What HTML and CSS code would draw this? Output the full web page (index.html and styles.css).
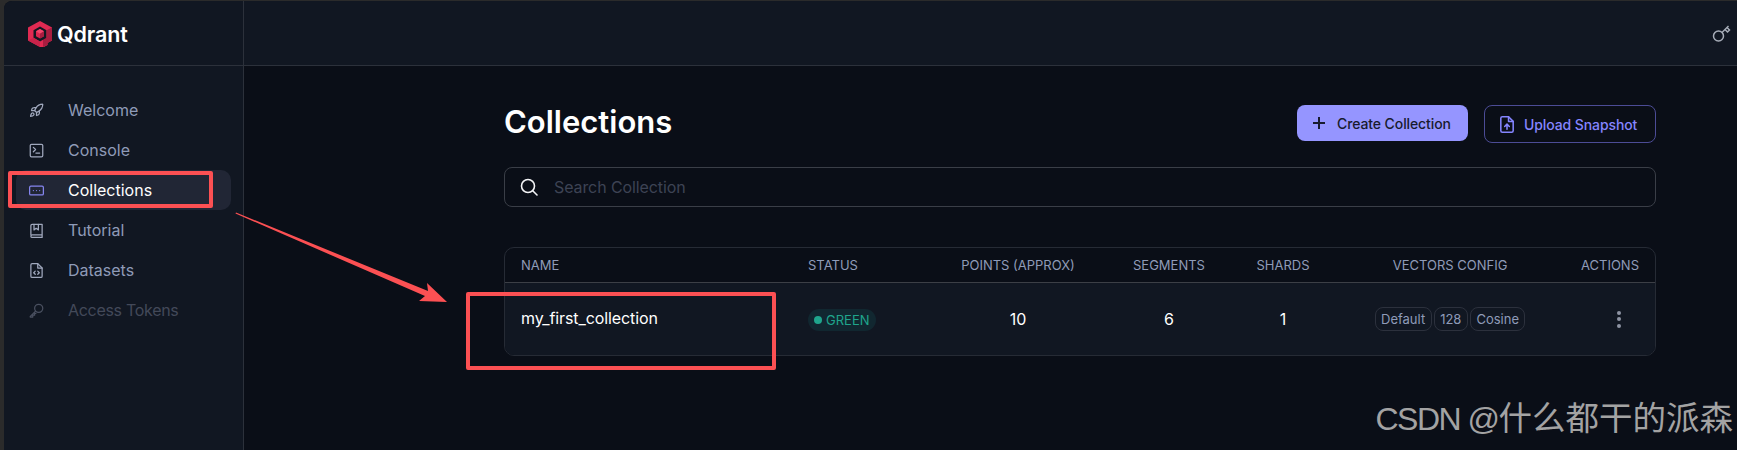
FILE: index.html
```html
<!DOCTYPE html>
<html lang="en">
<head>
<meta charset="utf-8">
<title>Qdrant Collections</title>
<link rel="stylesheet" href="styles.css">
</head>
<body>
<div class="app">
  <aside class="sidebar">
    <div class="brand">
      <svg class="logo" viewBox="0 0 24 26" width="24" height="26">
        <path fill-rule="evenodd" d="M12 0 L24 6.500 V19.500 L19.500 22 V24 L16 26 H12 L0 19.500 V6.500 Z M12 5.500 L5.500 9.200 V16.800 L12 20.500 L15 18.800 V24 L18.500 22 V9.200 Z" fill="#e02a52"/>
        <path d="M18.500 9.200 L24 6.500 V19.500 L19.500 22 V24 L15 26 V18.800 L18.500 16.800 Z" fill="#a81d40"/>
        <path d="M0 19.500 L5.500 16.800 L12 20.500 V26 Z" fill="#c9234a"/>
        <path d="M12 8 L16 10.300 V15.200 L12 17.500 L8 15.200 V10.300 Z" fill="#d9264e"/>
        <path d="M12 8 L16 10.300 L12 12.700 L8 10.300 Z" fill="#f2476d"/>
        <path d="M12 12.700 L16 10.300 V15.200 L12 17.500 Z" fill="#a81d40"/>
      </svg>
      <span class="brand-name">Qdrant</span>
    </div>
    <nav class="nav">
      <a class="nav-item">
        <svg class="nav-icon" viewBox="0 0 24 24"><path d="M4.500 16.500c-1.500 1.300-2 5-2 5s3.700-.5 5-2c.7-.8.7-2.100-.1-2.900a2.200 2.200 0 0 0-2.900-.1z"/><path d="M12 15l-3-3a22 22 0 0 1 2-3.900A12.900 12.900 0 0 1 22 2c0 2.700-.8 7.500-6 11a22 22 0 0 1-4 2z"/><path d="M9 12H4s.5-3 2-4c1.600-1.100 5-.5 5-.5"/><path d="M12 15v5s3-.5 4-2c1.100-1.600.5-5 .5-5"/></svg>
        <span>Welcome</span>
      </a>
      <a class="nav-item">
        <svg class="nav-icon" viewBox="0 0 24 24"><rect x="2" y="2" width="20" height="20" rx="2"/><path d="M7 7l3.500 3.500L7 14"/><path d="M11 16h6"/></svg>
        <span>Console</span>
      </a>
      <a class="nav-item is-active">
        <svg class="nav-icon" viewBox="0 0 24 24"><rect x="1" y="5" width="22" height="14" rx="2"/><path d="M7 12h.01M12 12h.01M17 12h.01"/></svg>
        <span>Collections</span>
      </a>
      <a class="nav-item">
        <svg class="nav-icon" viewBox="0 0 24 24"><path d="M3 19V4a2 2 0 0 1 2-2h16v21H5a2 2 0 0 1-2-2a2 2 0 0 1 2-2h16"/><path d="M8 2v9l3.500-2.500L15 11V2"/></svg>
        <span>Tutorial</span>
      </a>
      <a class="nav-item">
        <svg class="nav-icon" viewBox="0 0 24 24"><path d="M14 1H5a2 2 0 0 0-2 2v18a2 2 0 0 0 2 2h14a2 2 0 0 0 2-2V8z"/><path d="M14 1v7h7"/><path d="M10 13l-2.500 2.500L10 18M14 13l2.500 2.500L14 18"/></svg>
        <span>Datasets</span>
      </a>
      <a class="nav-item is-disabled">
        <svg class="nav-icon" viewBox="0 0 24 24"><circle cx="15.500" cy="8.500" r="6.500"/><path d="M10.500 13L2 21.500v1h4v-3h3v-3h2"/></svg>
        <span>Access Tokens</span>
      </a>
    </nav>
  </aside>
  <div class="main">
    <header class="topbar">
      <svg class="key" viewBox="0 0 20 20" width="20" height="20"><circle cx="6.500" cy="13" r="5"/><path d="M10 9.500L16.500 3"/><path d="M13 6.500l2.500 2.500 2-2-2.500-2.500"/></svg>
    </header>
    <section class="content">
      <div class="title-row">
        <h1 class="title">Collections</h1>
        <div class="actions">
          <button class="btn btn-primary">
            <svg class="btn-icon" viewBox="2 2 12 12"><path d="M8 2v12M2 8h12"/></svg>
            Create Collection
          </button>
          <button class="btn btn-outline">
            <svg class="btn-icon" viewBox="3 1 18 22"><path d="M14 2H6a2 2 0 0 0-2 2v16a2 2 0 0 0 2 2h12a2 2 0 0 0 2-2V8z"/><path d="M14 2v6h6"/><path d="M12 18v-6M9 14.500l3-3 3 3"/></svg>
            Upload Snapshot
          </button>
        </div>
      </div>
      <label class="search">
        <svg class="search-icon" viewBox="0 0 18 18"><circle cx="8" cy="8" r="6.500"/><path d="M13 13l4 4"/></svg>
        <input class="search-input" placeholder="Search Collection">
      </label>
      <div class="table">
        <div class="row row-head">
          <div class="col-name">NAME</div>
          <div class="col-status">STATUS</div>
          <div class="col-points">POINTS (APPROX)</div>
          <div class="col-segments">SEGMENTS</div>
          <div class="col-shards">SHARDS</div>
          <div class="col-vectors">VECTORS CONFIG</div>
          <div class="col-actions">ACTIONS</div>
        </div>
        <div class="row row-body">
          <div class="col-name cell-name">my_first_collection</div>
          <div class="col-status"><span class="status"><i class="dot"></i>GREEN</span></div>
          <div class="col-points cell-num">10</div>
          <div class="col-segments cell-num">6</div>
          <div class="col-shards cell-num">1</div>
          <div class="col-vectors chips"><span class="chip">Default</span><span class="chip">128</span><span class="chip">Cosine</span></div>
          <div class="col-actions cell-kebab"><span class="kebab"><i></i><i></i><i></i></span></div>
        </div>
      </div>
    </section>
  </div>
</div>
<div class="mark mark-nav"></div>
<div class="mark mark-row"></div>
<svg class="arrow" viewBox="0 0 1737 450" width="1737" height="450"><path d="M236 212.500 L428 291 L427 283 L447 302 L419 301 L425 296 L235.500 213.500 Z"/></svg>
<div class="watermark"><span class="wm-latin">CSDN @</span><span class="wm-cjk">什么都干的派森</span></div>
</body>
</html>
```
FILE: styles.css
```css
* { box-sizing: border-box; }
html, body { margin: 0; height: 450px; overflow: hidden; }
body {
  position: relative;
  background: #2b2b2b;
  font-family: Inter, "Liberation Sans", sans-serif;
  padding: 1px 0 0 4px;
}
.app {
  display: flex;
  height: 449px;
  background: #0a0e17;
  border-top-left-radius: 8px;
  overflow: hidden;
}
.sidebar {
  flex: 0 0 240px;
  background: #111722;
  border-right: 1px solid #2c313b;
}
.brand {
  display: flex;
  align-items: center;
  gap: 1px;
  height: 65px;
  padding: 1px 0 0 24px;
  border-bottom: 1px solid #2c313b;
}
.logo { display: block; }
.brand-name {
  margin-left: 4px;
  color: #ffffff;
  font-size: 21.500px;
  font-weight: 600;
  letter-spacing: -0.1px;
}
.nav {
  display: flex;
  flex-direction: column;
  padding: 24px 12px 0;
}
.nav-item {
  display: flex;
  align-items: center;
  gap: 24px;
  height: 40px;
  padding-left: 13px;
  border-radius: 10px;
  color: #8f9bb8;
  font-size: 16px;
}
.nav-icon {
  width: 15px;
  height: 15px;
  flex: none;
  fill: none;
  stroke: #a0a8bd;
  stroke-width: 2;
  stroke-linecap: round;
  stroke-linejoin: round;
}
.nav-item.is-active { background: #212635; color: #ffffff; }
.nav-item.is-active .nav-icon { stroke: #8585ee; }
.nav-item.is-disabled { color: #434959; letter-spacing: -0.3px; }
.nav-item.is-disabled .nav-icon { stroke: #4a5060; }
.main { flex: 1; min-width: 0; display: flex; flex-direction: column; }
.topbar {
  display: flex;
  justify-content: flex-end;
  align-items: center;
  height: 65px;
  padding: 0 5px 0 0;
  background: #111722;
  border-bottom: 1px solid #2c313b;
}
.key {
  fill: none;
  stroke: #a7adb8;
  stroke-width: 1.500;
}
.content { padding: 39px 81px 0 260px; }
.title-row {
  display: flex;
  justify-content: space-between;
  align-items: flex-start;
  height: 62px;
}
.title {
  margin: -1px 0 0;
  color: #ffffff;
  font-size: 31px;
  line-height: 36px;
  font-weight: 600;
}
.actions { display: flex; gap: 16px; }
.btn {
  display: flex;
  align-items: center;
  border-radius: 8px;
  font-family: inherit;
  font-size: 14px;
  font-weight: 500;
  letter-spacing: -0.1px;
  height: 38px;
  padding: 0;
}
.btn-primary {
  width: 171px;
  height: 36px;
  gap: 12px;
  padding-left: 16px;
  background: #9595ff;
  color: #181b2e;
  border: 0;
}
.btn-primary .btn-icon {
  width: 12px;
  height: 12px;
  stroke: #181b2e;
  stroke-linecap: butt;
}
.btn-outline {
  width: 172px;
  gap: 10px;
  padding-left: 15px;
  background: transparent;
  color: #8585ff;
  border: 1px solid #4c4c96;
}
.btn-icon {
  width: 14px;
  height: 17px;
  flex: none;
  fill: none;
  stroke: #8585ff;
  stroke-width: 2;
  stroke-linecap: round;
  stroke-linejoin: round;
}
.search {
  display: flex;
  align-items: center;
  gap: 16px;
  height: 40px;
  padding-left: 15px;
  border: 1px solid #3a3e47;
  border-radius: 8px;
}
.search-icon {
  width: 18px;
  height: 18px;
  flex: none;
  fill: none;
  stroke: #f2f3f5;
  stroke-width: 1.600;
  stroke-linecap: round;
}
.search-input {
  flex: 1;
  min-width: 0;
  background: transparent;
  border: 0;
  outline: 0;
  padding: 0;
  font-family: inherit;
  font-size: 16px;
  letter-spacing: -0.1px;
  color: #ffffff;
}
.search-input::placeholder { color: #3d4354; opacity: 1; }
.table {
  margin-top: 40px;
  border: 1px solid #262b35;
  border-radius: 10px;
  overflow: hidden;
}
.row {
  display: grid;
  grid-template-columns: 286px 150px 154px 148px 80px 254px 66px 12px;
  align-items: center;
  text-align: center;
}
.row-head {
  height: 35px;
  padding-bottom: 1px;
  border-bottom: 1px solid #3c3f46;
  color: #8f9bb8;
  font-size: 13px;
  white-space: nowrap;
}
.row-body { height: 72px; background: #111722; }
.col-name { padding-left: 16px; text-align: left; }
.col-status { text-align: left; margin-left: 17px; white-space: nowrap; }
.cell-name { color: #ffffff; font-size: 16px; margin-top: -2px; letter-spacing: -0.1px; }
.cell-num { color: #ffffff; font-size: 16px; }
.status {
  display: inline-flex;
  align-items: center;
  gap: 4px;
  height: 22px;
  padding: 0 6px;
  border-radius: 11px;
  background: #112730;
  color: #1fa58c;
  font-size: 13px;
}
.dot { width: 8px; height: 8px; border-radius: 50%; background: #1fa58c; }
.chips { display: flex; justify-content: center; gap: 2px; }
.chip {
  display: inline-flex;
  align-items: center;
  height: 24px;
  padding: 0 5.500px;
  border: 1px solid #2c313d;
  border-radius: 8px;
  color: #8f9bb8;
  font-size: 13px;
}
.cell-kebab { display: flex; justify-content: center; padding-left: 18px; }
.kebab { display: flex; flex-direction: column; gap: 2.500px; }
.kebab i { width: 4px; height: 4px; border-radius: 50%; background: #8e94a3; }
.mark {
  position: absolute;
  border: 4px solid #fc5053;
  border-radius: 2px;
}
.mark-nav { left: 8px; top: 171px; width: 205px; height: 37px; }
.mark-row { left: 466px; top: 292px; width: 310px; height: 78px; }
.arrow { position: absolute; left: 0; top: 0; fill: #fc5053; pointer-events: none; }
.watermark {
  position: absolute;
  right: 4px;
  top: 395px;
  color: #a3a3a3;
  font-family: "Liberation Sans", "Noto Sans CJK SC", sans-serif;
  line-height: 48px;
  white-space: nowrap;
}
.wm-latin { font-size: 32px; letter-spacing: -1.500px; }
.wm-cjk { font-size: 33.500px; }
```
